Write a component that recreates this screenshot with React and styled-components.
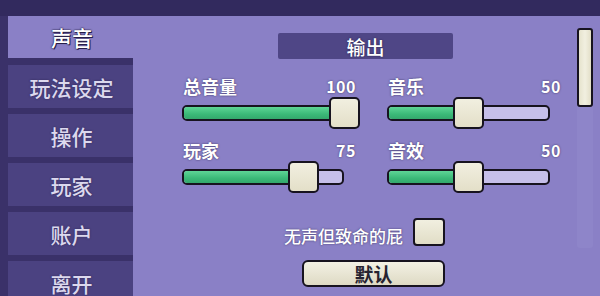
import React from "react";
import styled, { createGlobalStyle } from "styled-components";

const GlobalStyle = createGlobalStyle`
  html, body {
    margin: 0;
    padding: 0;
    overflow: hidden;
    background: #3a3169;
  }
  * {
    box-sizing: border-box;
  }
`;

const Screen = styled.div`
  width: 600px;
  height: 296px;
  display: flex;
  flex-direction: column;
  background: #3a3169;
  font-family: "Noto Sans CJK SC", "Noto Sans", sans-serif;
  overflow: hidden;
`;

const TopBar = styled.div`
  height: 16px;
  flex-shrink: 0;
  background: #322a5e;
`;

const Body = styled.div`
  flex: 1;
  display: flex;
  padding-left: 8px;
  min-height: 0;
`;

const TabColumn = styled.div`
  width: 125px;
  display: flex;
  flex-direction: column;
  gap: 6px;
  flex-shrink: 0;
`;

const Tab = styled.div`
  height: ${(p) => (p.$active ? "42px" : "43px")};
  margin-bottom: ${(p) => (p.$active ? "1px" : "0")};
  flex-shrink: 0;
  display: flex;
  align-items: center;
  justify-content: center;
  padding-left: 2px;
  background: ${(p) => (p.$active ? "#8a80c6" : "#4b4281")};
  color: ${(p) => (p.$active ? "#ffffff" : "#dcd8ee")};
  font-size: 21px;
  font-weight: 500;
  text-shadow: ${(p) =>
    p.$active
      ? "0 0 1px #1e173a, 0 0 2px #1e173a, 1px 1px 0 #2a2150"
      : "0 0 2px rgba(30, 23, 58, 0.6)"};
  margin-right: ${(p) => (p.$active ? "-1px" : "0")};
`;

const Panel = styled.div`
  flex: 1;
  display: flex;
  background: #8a80c6;
  padding-left: 49px;
`;

const Content = styled.div`
  width: 379px;
  display: flex;
  flex-direction: column;
  padding-top: 17px;
`;

const SectionHeader = styled.div`
  width: 175px;
  height: 26px;
  margin-left: 96px;
  background: #4f4686;
  border-radius: 2px;
  display: flex;
  align-items: center;
  justify-content: center;
  color: #ffffff;
  font-size: 19px;
  font-weight: 500;
  text-shadow: 0 0 2px rgba(20, 14, 45, 0.7);
`;

const SliderGrid = styled.div`
  margin-top: 16px;
  display: grid;
  grid-template-columns: 174px 174px;
  column-gap: 31px;
  row-gap: 10px;
`;

const SliderBlock = styled.div`
  display: flex;
  flex-direction: column;
`;

const LabelRow = styled.div`
  height: 22px;
  display: flex;
  align-items: center;
  justify-content: space-between;
  color: #ffffff;
  text-shadow: 0 0 2px rgba(30, 20, 60, 0.75);
`;

const Label = styled.span`
  font-size: 18px;
  font-weight: 700;
  padding-left: 1px;
`;

const Value = styled.span`
  font-size: 16px;
  font-weight: 700;
  letter-spacing: 0.5px;
`;

const SliderArea = styled.div`
  position: relative;
  height: 32px;
  width: ${(p) => p.$width}px;
  display: flex;
  align-items: center;
`;

const Track = styled.div`
  width: 100%;
  height: 16px;
  border: 2px solid #17131f;
  border-radius: 5px;
  background: #c6bfea;
  overflow: hidden;
  display: flex;
`;

const Fill = styled.div`
  height: 100%;
  background: linear-gradient(#5ed596, #3bb978 60%, #34a86c);
`;

const Thumb = styled.div`
  position: absolute;
  top: 0;
  width: 31px;
  height: 32px;
  border: 2px solid #17131f;
  border-radius: 5px;
  background: linear-gradient(#f1efe0, #e3dfc8);
`;

const Footer = styled.div`
  margin-top: 25px;
  width: 263px;
  display: flex;
  flex-direction: column;
  align-items: flex-end;
`;

const CheckRow = styled.div`
  display: flex;
  align-items: center;
  gap: 10px;
  height: 28px;
`;

const CheckText = styled.span`
  color: #ffffff;
  font-size: 17px;
  font-weight: 500;
  text-shadow: 0 0 2px rgba(30, 20, 60, 0.7);
  padding-top: 6px;
`;

const CheckBox = styled.div`
  width: 32px;
  height: 28px;
  border: 2px solid #17131f;
  border-radius: 4px;
  background: linear-gradient(#f1efe0, #e1ddc6);
`;

const DefaultButton = styled.button`
  margin-top: 14px;
  width: 143px;
  height: 27px;
  border: 2px solid #17131f;
  border-radius: 6px;
  background: linear-gradient(#f3f1e4, #dedac4);
  color: #262330;
  font-family: "Noto Sans CJK SC", sans-serif;
  font-size: 19px;
  font-weight: 700;
  padding: 0;
  display: flex;
  align-items: center;
  justify-content: center;
  line-height: 1;
`;

const ScrollTrack = styled.div`
  margin-left: 16px;
  margin-top: 12px;
  width: 16px;
  height: 220px;
  display: flex;
  flex-direction: column;
  background: rgba(150, 142, 205, 0.35);
  border-radius: 3px;
`;

const ScrollThumb = styled.div`
  height: 79px;
  border: 2px solid #17131f;
  border-radius: 3px;
  background: linear-gradient(90deg, #e6e3cd, #f1efe0 50%, #e3dfc8);
`;

const tabs = ["声音", "玩法设定", "操作", "玩家", "账户", "离开"];

// pos: where the thumb sits along the track (0..1)
const sliders = [
  { label: "总音量", value: 100, pos: 1, width: 178 },
  { label: "音乐", value: 50, pos: 0.5, width: 163 },
  { label: "玩家", value: 75, pos: 0.81, width: 162 },
  { label: "音效", value: 50, pos: 0.5, width: 163 },
];

const Slider = ({ label, value, pos, width }) => {
  const thumbLeft = pos * (width - 31);
  return (
    <SliderBlock>
      <LabelRow>
        <Label>{label}</Label>
        <Value>{value}</Value>
      </LabelRow>
      <SliderArea $width={width}>
        <Track>
          <Fill style={{ width: thumbLeft + 12 }} />
        </Track>
        <Thumb style={{ left: thumbLeft }} />
      </SliderArea>
    </SliderBlock>
  );
};

export default function App() {
  return (
    <>
      <GlobalStyle />
      <Screen>
        <TopBar />
        <Body>
          <TabColumn>
            {tabs.map((t, i) => (
              <Tab key={t} $active={i === 0}>
                {t}
              </Tab>
            ))}
          </TabColumn>
          <Panel>
            <Content>
              <SectionHeader>输出</SectionHeader>
              <SliderGrid>
                {sliders.map((s) => (
                  <Slider key={s.label} {...s} />
                ))}
              </SliderGrid>
              <Footer>
                <CheckRow>
                  <CheckText>无声但致命的屁</CheckText>
                  <CheckBox />
                </CheckRow>
                <DefaultButton>默认</DefaultButton>
              </Footer>
            </Content>
            <ScrollTrack>
              <ScrollThumb />
            </ScrollTrack>
          </Panel>
        </Body>
      </Screen>
    </>
  );
}
